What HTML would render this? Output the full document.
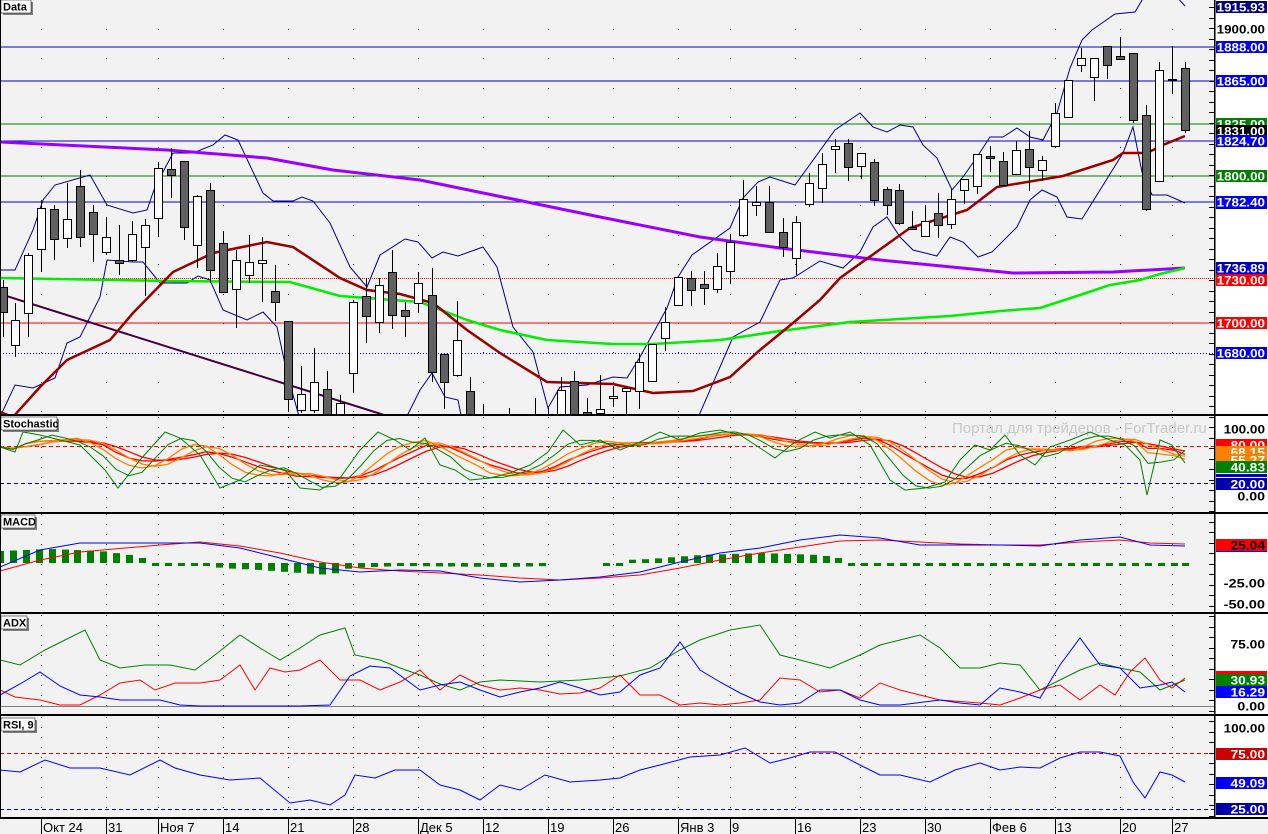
<!DOCTYPE html>
<html><head><meta charset="utf-8">
<style>
html,body{margin:0;padding:0;background:#f2f2f2;}
body{width:1268px;height:834px;overflow:hidden;position:relative;font-family:"Liberation Sans",sans-serif;}
svg{position:absolute;left:0;top:0;}
</style></head>
<body>
<svg id="s" width="1268" height="834" xmlns="http://www.w3.org/2000/svg" font-family="Liberation Sans, sans-serif"></svg>
<script>
var S=document.getElementById('s');var out=[];
function P(pts){return pts.map(function(p){return p[0]+','+p[1]}).join(' ');}
function line(pts,c,w,extra){out.push('<polyline points="'+P(pts)+'" fill="none" stroke="'+c+'" stroke-width="'+w+'" '+(extra||'')+'/>');}
function hl(y,c,w,dash,x2){out.push('<line x1="0" y1="'+y+'" x2="'+(x2||1214)+'" y2="'+y+'" stroke="'+c+'" stroke-width="'+(w||1)+'" '+(dash?'stroke-dasharray="'+dash+'"':'')+'/>');}
out.push('<rect x="0" y="0" width="1268" height="834" fill="#f2f2f2"/>');
out.push('<rect x="1216" y="0" width="52" height="818" fill="#ffffff"/>');
out.push('<defs><clipPath id="cm"><rect x="0" y="0" width="1214" height="415"/></clipPath></defs>');
var weeks=[41,106,158,223,288,353,418,483,548,613,678,730,795,860,925,990,1055,1120,1172];
for(var i=0;i<weeks.length;i++){for(var y=29;y<415;y+=29.4){out.push('<rect x="'+weeks[i]+'" y="'+Math.round(y)+'" width="1" height="1" fill="#000"/>');}}
[[417,512],[514,611],[615,712],[717,817]].forEach(function(r){weeks.forEach(function(x){out.push('<line x1="'+(x+0.5)+'" y1="'+r[0]+'" x2="'+(x+0.5)+'" y2="'+r[1]+'" stroke="#000" stroke-width="1" stroke-dasharray="1,9"/>');});});
hl(47,'#0000cc');hl(81,'#0000cc');hl(124,'#008000');hl(141,'#0000cc');hl(176,'#008000');hl(202,'#0000cc');
hl(278.5,'#ff0000',1,'1,1');hl(323,'#ff0000',1);hl(353.5,'#0000ff',1,'1,2');
out.push('<g clip-path="url(#cm)">');
line([[0,270],[15,270],[33,230],[43,200],[55,185],[90,175],[107,205],[133,213],[147,210],[155,187],[173,153],[193,153],[213,145],[225,135],[238,140],[263,193],[273,201],[293,201],[302,197],[313,201],[330,223],[350,267],[367,287],[380,255],[405,239],[418,242],[432,258],[443,252],[458,256],[483,247],[497,267],[513,327],[533,352],[548,408],[560,387],[587,385],[613,377],[627,378],[640,357],[667,308],[678,277],[692,255],[730,228],[743,198],[758,182],[770,177],[795,185],[835,130],[860,113],[873,127],[887,132],[900,125],[913,127],[923,145],[937,158],[952,190],[963,177],[977,157],[990,137],[1003,137],[1017,128],[1030,137],[1043,140],[1057,113],[1070,68],[1082,40],[1092,30],[1115,14],[1135,12],[1145,-5],[1175,-5],[1185,6]],'#000080',1);
line([[0,417],[15,385],[33,388],[55,378],[67,343],[80,337],[100,297],[107,260],[133,262],[143,262],[160,283],[187,283],[198,276],[210,280],[223,310],[247,320],[263,312],[277,327],[287,373],[300,420]],'#000080',1);
line([[405,420],[420,390],[432,373],[445,397],[458,400],[462,420]],'#000080',1);
line([[697,420],[733,337],[760,322],[780,280],[793,278],[820,261],[843,268],[860,252],[873,227],[887,217],[900,237],[913,250],[937,256],[950,237],[963,242],[978,257],[992,252],[1017,227],[1030,200],[1042,190],[1057,197],[1067,217],[1082,219],[1105,182],[1123,153],[1133,127],[1142,172],[1152,195],[1167,195],[1185,203]],'#000080',1);
line([[0,294],[400,420]],'#400040',2);
line([[0,142],[167,150],[267,158],[333,170],[420,180],[600,217],[700,237],[780,248],[880,260],[1013,273],[1113,272],[1185,268]],'#9900ff',3);
line([[0,278],[170,281],[290,282],[340,296],[420,302],[467,320],[500,330],[547,340],[613,344],[653,344],[720,340],[780,331],[850,322],[950,316],[1000,311],[1040,308],[1080,295],[1110,285],[1140,280],[1160,274],[1185,268]],'#00ee00',2.5);
line([[0,412],[13,417],[40,387],[67,360],[110,340],[133,313],[173,272],[213,253],[267,242],[293,247],[340,278],[367,290],[400,294],[433,303],[467,330],[500,353],[547,382],[613,384],[653,393],[693,391],[730,377],[760,350],[793,323],[820,300],[840,278],[910,228],[967,210],[997,187],[1063,176],[1113,160],[1123,153],[1147,153],[1163,145],[1185,136]],'#990000',2.5);
var C=[[3,287,312,280,337,1],[15,320,345,303,357,0],[28,255,313,253,337,0],[41,208,249,200,272,0],[54,209,239,205,260,1],[67,219,238,183,248,0],[80,186,237,170,247,1],[93,212,234,205,262,1],[106,237,252,217,255,0],[119,260,263,225,275,1],[132,234,260,221,262,0],[145,225,247,219,296,0],[158,168,218,162,237,0],[171,169,175,148,198,1],[184,161,227,161,240,1],[197,196,245,195,268,0],[210,190,270,183,283,1],[223,243,292,231,292,1],[236,260,289,250,328,0],[249,262,275,235,283,0],[262,260,263,237,302,0],[275,291,302,265,321,1],[288,321,399,321,411,1],[301,394,410,366,413,0],[314,382,410,348,413,0],[327,389,420,371,420,1],[340,403,420,395,420,0],[353,302,373,300,393,0],[366,296,316,278,343,1],[379,285,322,278,333,0],[392,272,315,250,329,1],[405,310,316,302,337,1],[418,283,303,272,313,0],[432,295,372,268,382,1],[444,354,382,354,409,1],[457,340,375,301,377,0],[470,391,420,377,420,1],[483,420,425,404,425,1],[509,420,425,408,425,1],[535,420,425,398,425,1],[548,420,425,408,425,1],[561,390,420,377,420,0],[574,381,420,371,420,1],[587,412,420,398,420,1],[600,409,413,375,417,0],[613,396,398,386,407,0],[626,388,391,388,417,0],[639,362,391,353,409,0],[652,344,381,344,381,0],[665,322,338,307,351,0],[678,277,305,277,305,0],[691,278,290,271,306,1],[704,284,288,271,305,1],[717,266,289,253,293,0],[730,242,271,234,284,0],[743,199,235,180,237,0],[756,202,205,186,216,0],[769,202,232,186,232,1],[783,232,247,218,257,1],[796,222,258,216,275,0],[809,183,204,173,207,0],[822,164,188,153,203,0],[835,146,149,139,173,0],[848,143,167,139,181,1],[861,153,166,153,179,0],[874,162,200,159,206,1],[887,189,205,187,215,1],[899,190,223,184,225,1],[912,227,229,211,229,1],[925,221,236,205,237,0],[938,213,225,193,238,1],[951,199,224,189,229,0],[964,179,190,179,204,0],[977,154,186,154,194,0],[990,156,158,146,172,1],[1003,161,185,152,185,1],[1016,150,174,141,174,0],[1029,149,167,131,191,1],[1042,160,170,156,181,0],[1055,113,146,103,148,0],[1068,80,117,80,117,0],[1081,58,65,48,72,0],[1094,58,77,58,101,0],[1107,46,65,46,79,1],[1120,56,59,37,59,1],[1133,53,120,53,123,1],[1146,115,209,105,211,1],[1159,70,181,62,181,0],[1172,79,80,46,94,1],[1185,68,130,62,133,1]];
C.forEach(function(c){var x=c[0];out.push('<line x1="'+(x+0.5)+'" y1="'+c[3]+'" x2="'+(x+0.5)+'" y2="'+c[4]+'" stroke="#000" stroke-width="1"/>');
var h=Math.max(c[2]-c[1],1);out.push('<rect x="'+(x-3.5)+'" y="'+(c[1]+0.5)+'" width="8" height="'+h+'" fill="'+(c[5]?'#606060':'#fff')+'" stroke="#000" stroke-width="1"/>');});
out.push('</g>');
function interp(pts,x){for(var i=0;i<pts.length-1;i++){if(x>=pts[i][0]&&x<=pts[i+1][0]){var t=(x-pts[i][0])/(pts[i+1][0]-pts[i][0]);return pts[i][1]+t*(pts[i+1][1]-pts[i][1]);}}return pts[pts.length-1][1];}
hl(446.5,'#ff0000',1,'4,3');hl(483.5,'#0000cc',1,'4,3');
out.push('<text x="952" y="433" font-size="15" fill="#c8c8c8">Портал для трейдеров - ForTrader.ru</text>');
var G=[[0,447],[15,452],[23,432],[40,435],[60,440],[80,445],[105,470],[118,488],[140,460],[165,432],[180,438],[200,455],[220,488],[240,480],[260,465],[285,470],[300,488],[320,490],[340,478],[360,450],[378,432],[395,440],[410,450],[425,438],[440,465],[455,470],[470,480],[490,478],[510,473],[530,465],[548,452],[563,430],[580,445],[600,440],[620,450],[640,442],[660,432],[680,440],[700,433],[720,430],[740,435],[760,448],[775,458],[795,442],[815,432],[830,438],[850,432],[870,445],[890,480],[905,490],[925,488],[945,482],[960,460],[975,445],[990,450],[1005,435],[1020,455],[1035,465],[1050,447],[1070,440],[1090,432],[1110,440],[1125,445],[1140,460],[1147,495],[1160,440],[1172,445],[1185,463]];
var xs=[];for(var x=0;x<=1185;x+=12.9)xs.push(Math.round(x));if(xs[xs.length-1]!=1185)xs.push(1185);
var g0=xs.map(function(x){return interp(G,x)});
function sma(a,n){return a.map(function(v,i){var s=0,c=0;for(var j=Math.max(0,i-n+1);j<=i;j++){s+=a[j];c++}return s/c;});}
function pl(a){return xs.map(function(x,i){return [x,a[i].toFixed(1)]});}
var g1=sma(g0,3),o1=sma(g0,5),o2=sma(o1,3),r1=sma(g0,7),r2=sma(r1,3);
line(pl(r2),'#ff0000',1.3);line(pl(r1),'#ff0000',1.3);line(pl(o2),'#ff8000',1.3);line(pl(o1),'#ff8000',1.3);line(pl(g1),'#008000',1);line(G,'#008000',1);
var H=[[0,12],[50,14],[100,12],[130,8],[150,3],[200,2],[220,-5],[260,-7],[300,-10],[330,-12],[350,-5],[400,-3],[500,-4],[550,-3],[560,0],[595,0],[600,2],[650,4],[700,8],[760,10],[820,8],[850,3],[900,-2],[1000,-1],[1100,0],[1140,-2],[1185,-2]];
xs.forEach(function(x){var v=interp(H,x);if(x>553&&x<597)return;var h=Math.max(Math.abs(v),3);var y=v>0?563-h:563;if(Math.abs(v)<3)y=563;out.push('<rect x="'+(x-3)+'" y="'+y+'" width="7" height="'+h+'" fill="#008000"/>');});
line([[0,571],[40,560],[80,552],[160,545],[200,542],[240,546],[280,553],[320,562],[360,568],[400,571],[440,573],[480,575],[520,578],[560,580],[600,578],[640,575],[680,568],[720,560],[760,553],[800,547],[840,541],[880,540],[920,542],[960,544],[1000,545],[1040,545],[1080,542],[1120,540],[1150,543],[1185,544]],'#ff0000',1);
line([[0,567],[40,550],[80,543],[160,543],[200,543],[240,548],[280,558],[320,568],[360,572],[400,570],[440,571],[480,578],[520,582],[560,580],[600,577],[640,572],[680,562],[720,553],[760,548],[800,540],[840,535],[880,538],[920,545],[960,545],[1000,545],[1040,546],[1080,540],[1120,537],[1150,545],[1185,546]],'#0000ff',1);
hl(706.5,'#808080',1);
line([[0,660],[20,665],[45,650],[65,640],[85,630],[100,660],[120,668],[145,665],[170,665],[195,670],[215,655],[240,635],[260,648],[280,660],[300,648],[320,635],[345,628],[355,655],[380,660],[400,668],[420,675],[440,684],[460,690],[480,682],[500,680],[540,682],[580,680],[620,676],[650,668],[680,650],[700,640],[730,630],[760,625],[780,655],[800,660],[830,668],[860,655],[880,645],[900,640],[920,635],[940,648],[960,668],[980,668],[1000,663],[1020,665],[1040,690],[1060,680],[1080,670],[1100,663],[1120,668],[1140,672],[1160,690],[1185,680]],'#008000',1);
line([[0,690],[15,697],[40,700],[60,705],[80,705],[100,695],[120,683],[140,680],[155,690],[175,683],[200,683],[220,680],[240,665],[255,690],[270,668],[285,672],[300,670],[320,660],[340,680],[360,680],[380,690],[400,682],[420,670],[440,690],[460,675],[480,685],[500,690],[520,688],[540,690],[560,694],[580,693],[600,688],[620,675],[640,695],[660,695],[680,705],[700,703],[720,705],[740,703],[760,700],[780,678],[800,680],[820,692],[840,690],[860,698],[880,683],[900,690],[940,700],[980,703],[1000,705],[1020,698],[1040,690],[1060,685],[1080,700],[1100,685],[1115,695],[1130,672],[1145,658],[1160,680],[1172,688],[1185,678]],'#ff0000',1);
line([[0,695],[20,684],[40,672],[60,686],[80,695],[100,697],[120,700],[140,700],[160,700],[180,705],[200,706],[230,706],[300,706],[330,705],[350,676],[370,666],[390,668],[420,690],[440,685],[460,682],[480,690],[500,697],[520,692],[540,688],[560,682],[580,688],[600,695],[620,692],[640,675],[660,668],[680,642],[700,670],[720,682],[740,693],[760,702],[780,705],[800,703],[820,690],[840,690],[860,700],[880,705],[900,705],[940,700],[960,703],[980,705],[1000,688],[1020,692],[1040,698],[1060,665],[1080,638],[1100,665],[1120,668],[1140,688],[1160,685],[1172,682],[1185,692]],'#0000ff',1);
hl(753.5,'#cc0000',1,'4,3');hl(809.5,'#0000cc',1,'4,3');
line([[0,770],[20,772],[45,760],[70,768],[100,768],[130,775],[160,760],[175,768],[200,775],[230,780],[260,778],[290,803],[310,800],[330,805],[345,795],[355,775],[375,778],[395,770],[420,770],[440,785],[460,790],[480,800],[500,785],[520,790],[545,775],[570,782],[600,780],[620,778],[640,770],[660,765],[690,757],[720,755],[745,748],[770,763],[790,758],[810,752],[835,752],[860,765],[880,775],[900,775],[930,782],[955,770],[980,763],[1000,770],[1020,767],[1040,768],[1060,758],[1080,752],[1100,752],[1120,756],[1133,782],[1145,798],[1160,772],[1172,775],[1185,782]],'#0000ff',1);
[415,513,613,715,818].forEach(function(y){out.push('<rect x="0" y="'+(y-1)+'" width="1268" height="2" fill="#000"/>');});
out.push('<rect x="1214" y="0" width="1.5" height="818" fill="#000"/>');
out.push('<rect x="0" y="0" width="1" height="818" fill="#000"/>');
for(var y=7;y<818;y+=10.5){out.push('<rect x="1209" y="'+Math.round(y)+'" width="5" height="1" fill="#000"/>');}
function title(x,y,t,w){out.push('<rect x="'+(x+2)+'" y="'+(y+2)+'" width="'+w+'" height="13" fill="#808080"/><rect x="'+x+'" y="'+y+'" width="'+w+'" height="13" fill="#fff" stroke="#000" stroke-width="0.5"/><text x="'+(x+2)+'" y="'+(y+10.5)+'" font-size="11" font-weight="bold" fill="#000">'+t+'</text>');}
title(1,0,'Data',30);title(1,417,'Stochastic',56);title(1,515,'MACD',34);title(1,616,'ADX',26);title(1,718,'RSI, 9',34);
function lab(y,t,bg,fg){if(bg)out.push('<rect x="1216" y="'+(y-6)+'" width="51" height="12" fill="'+bg+'"/>');out.push('<text x="1265" y="'+(y+4.5)+'" text-anchor="end" font-size="12" font-weight="bold" fill="'+(fg||'#fff')+'" textLength="'+(t.length*6.9)+'" lengthAdjust="spacingAndGlyphs">'+t+'</text>');}
lab(7,'1915.93','#000080');lab(29,'1900.00',null,'#000');lab(47,'1888.00','#0000ee');lab(81,'1865.00','#0000ee');
lab(124,'1825.00','#008000');lab(131,'1831.00','#000');lab(141,'1824.70','#0000ee');lab(176,'1800.00','#008000');
out.push('<rect x="1216" y="206" width="51" height="3" fill="#0000cc"/>');lab(202,'1782.40','#0000ee');
lab(268,'1736.89','#0000cc');lab(280,'1730.00','#ff0000');lab(323,'1700.00','#ff0000');lab(353,'1680.00','#0000ee');
lab(429,'100.00',null,'#000');lab(445,'80.00','#ff0000');lab(452,'68.15','#ff8000');lab(460,'55.27','#ff8000');lab(467,'40.83','#008000');
out.push('<rect x="1216" y="474" width="51" height="3" fill="#0000cc"/>');lab(484,'20.00','#0000aa');lab(496,'0.00',null,'#000');
out.push('<rect x="1216" y="549" width="51" height="3" fill="#0000ee"/>');lab(545,'25.04','#ff0000','#000');lab(583,'-25.00',null,'#000');lab(604,'-50.00',null,'#000');
lab(644,'75.00',null,'#000');out.push('<rect x="1216" y="671" width="51" height="3" fill="#ff0000"/>');lab(680,'30.93','#008000');lab(692,'16.29','#0000ff');lab(706,'0.00',null,'#000');
lab(728,'100.00',null,'#000');lab(754,'75.00','#cc0000');lab(783,'49.09','#0000ee');lab(809,'25.00','#0000aa');
var wl=['Окт 24','31','Ноя 7','14','21','28','Дек 5','12','19','26','Янв 3','9','16','23','30','Фев 6','13','20','27'];
weeks.forEach(function(x,i){out.push('<rect x="'+x+'" y="819" width="1" height="15" fill="#000"/><text x="'+(x+2)+'" y="832" font-size="13" fill="#000">'+wl[i]+'</text>');});
S.innerHTML=out.join('');
</script>
</body></html>
